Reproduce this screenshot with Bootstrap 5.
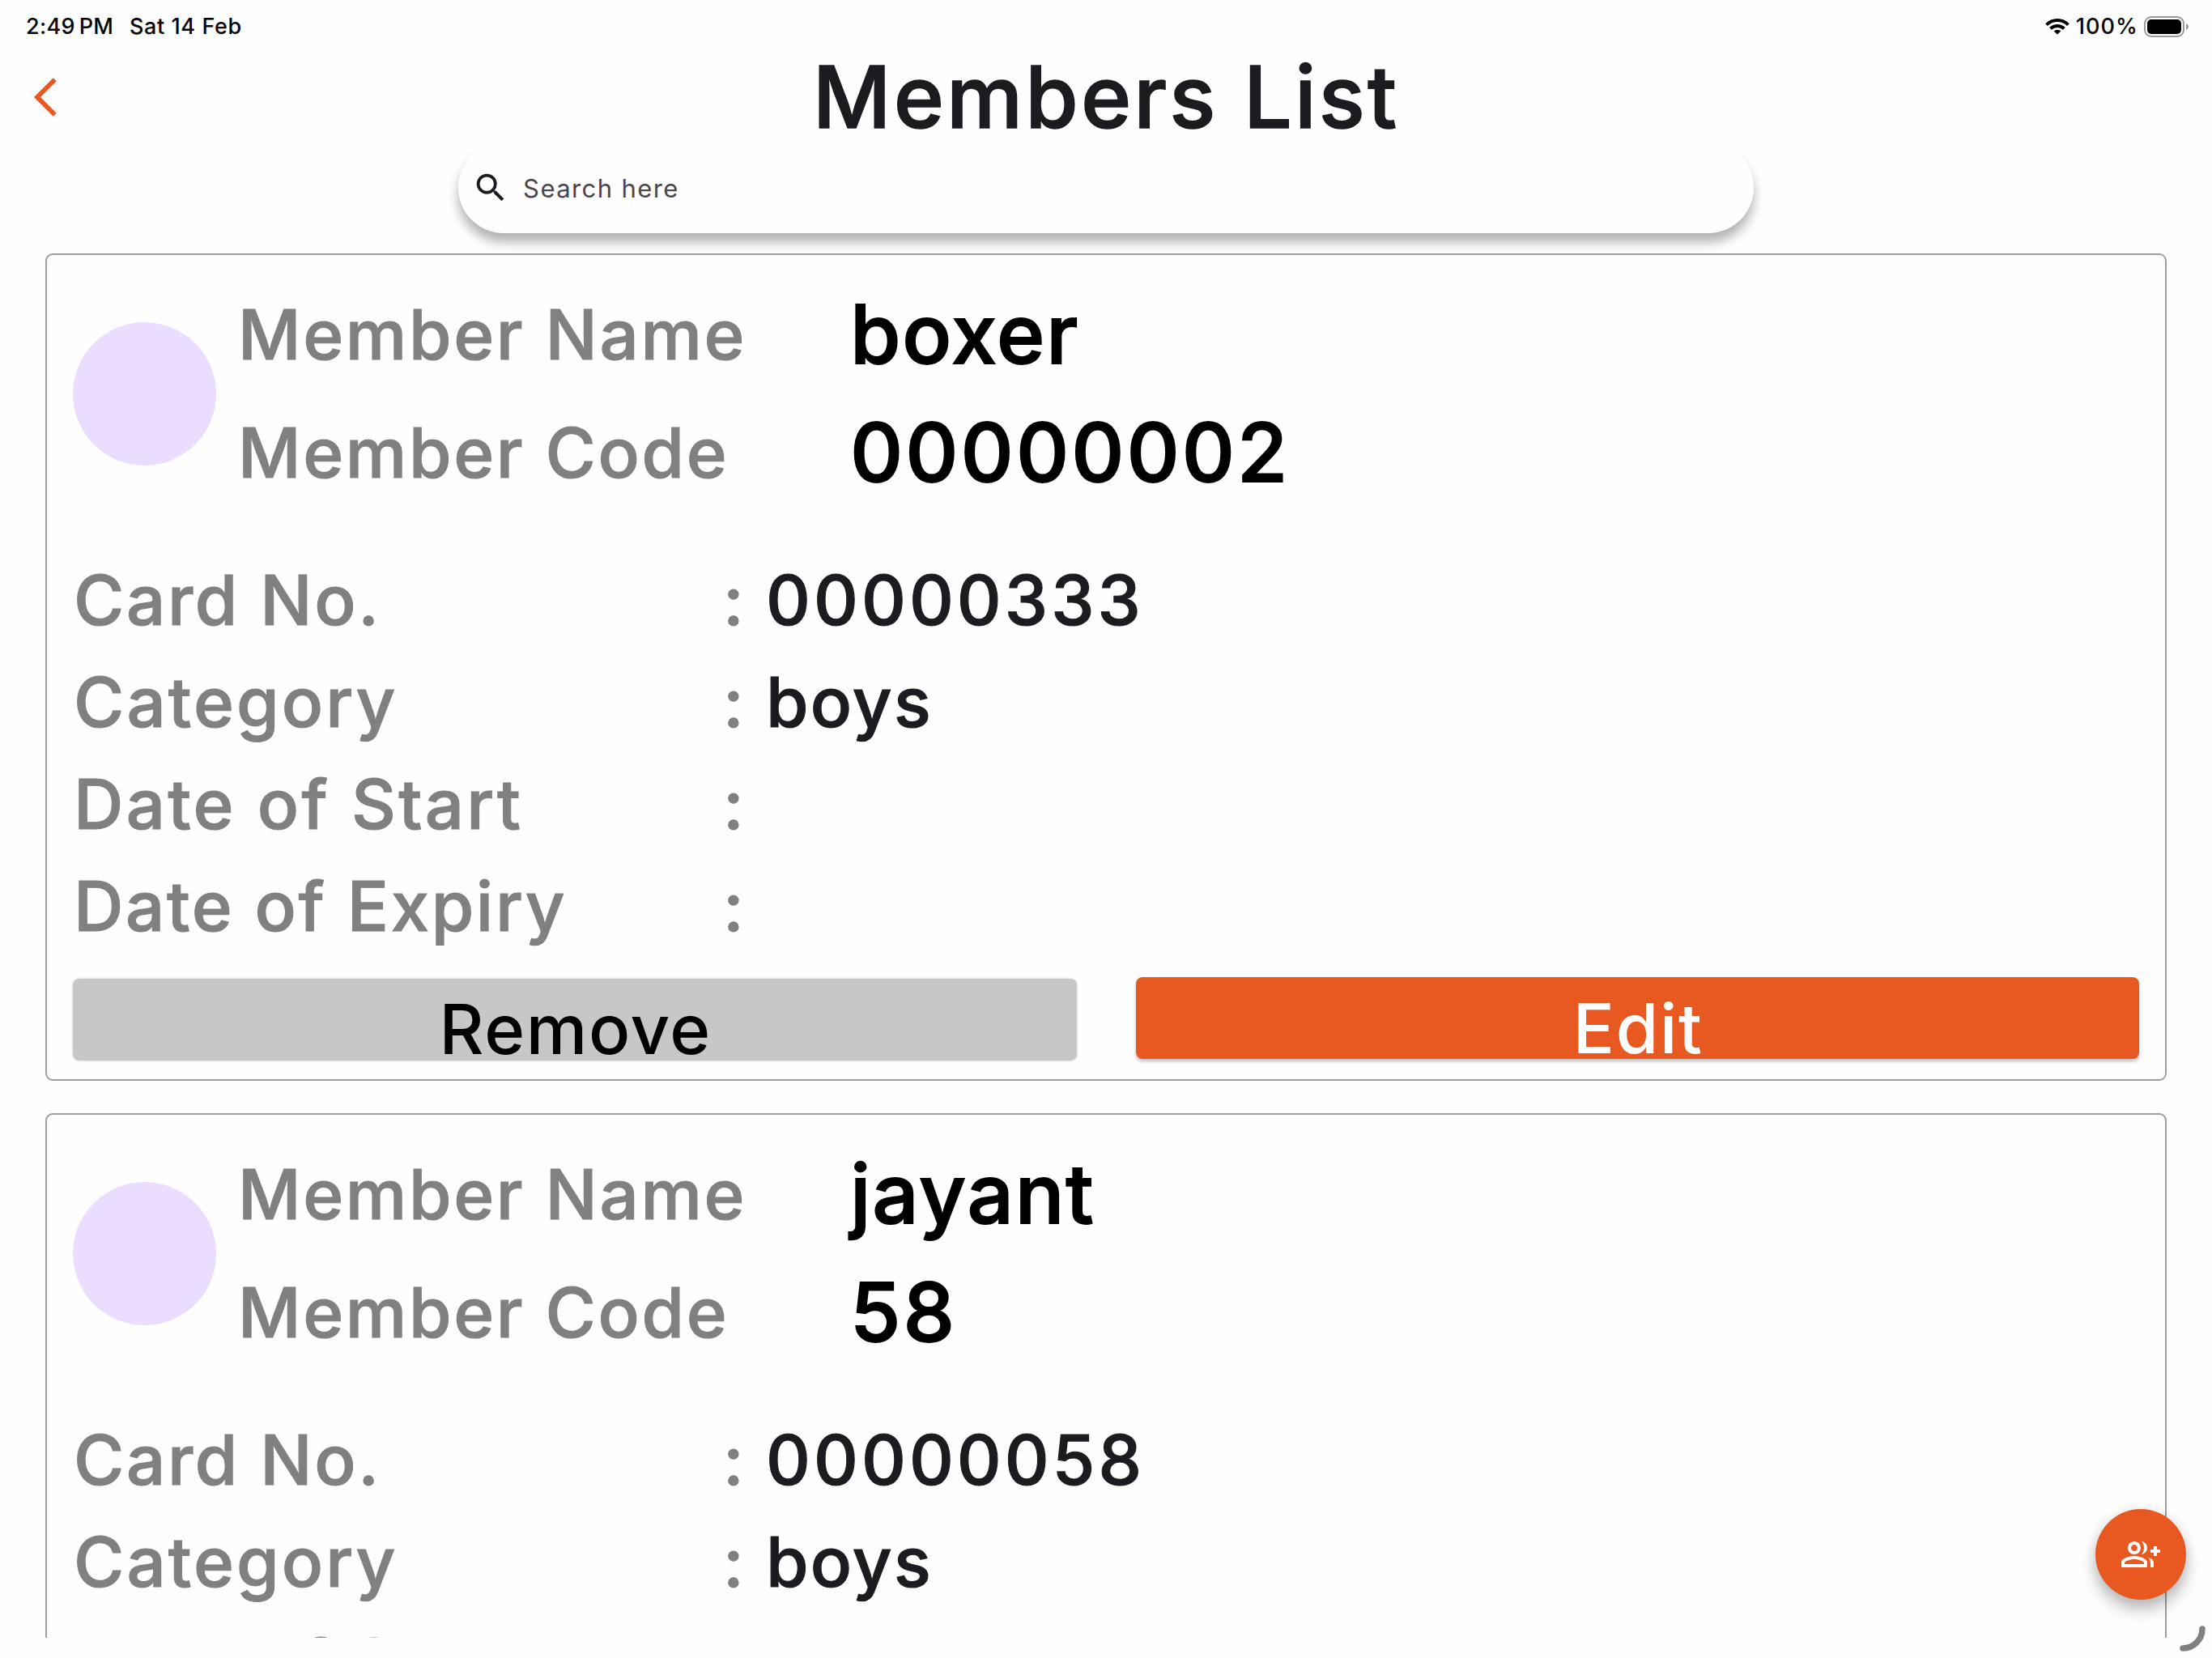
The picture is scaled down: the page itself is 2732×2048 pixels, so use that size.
<!DOCTYPE html>
<html lang="en">
<head>
  <meta charset="UTF-8">
  <meta name="viewport" content="width=device-width, initial-scale=1.0">
  <title>Members List</title>
  <!-- Bootstrap CSS -->
  <link href="https://cdn.jsdelivr.net/npm/bootstrap@5.3.0/dist/css/bootstrap.min.css" rel="stylesheet">
  <style>
    body {
      width: 2732px;
      height: 2048px;
      background: #fefefe;
      color: #1c1b20;
      font-family: Inter, "Liberation Sans", sans-serif;
      font-weight: 500;
    }
    .status-bar {
      height: 64px;
      padding: 2px 28px 0 32px;
      font-size: 27px;
      color: #000;
    }
    .status-bar svg { margin-bottom: 1px; }
    .status-time { width: 128px; letter-spacing: .3px; }
    .status-date { letter-spacing: .6px; }
    .status-battery { letter-spacing: 1.1px; margin: 0 7px 0 8px; }
    .page-head {
      height: 112px;
    }
    .page-head .back-link {
      left: 32px;
      line-height: 0;
    }
    .page-title {
      font-size: 106px;
      line-height: 112px;
      letter-spacing: 3.1px;
      -webkit-text-stroke: 1.5px currentColor;
    }
    .search-bar {
      width: 1600px;
      height: 112px;
      padding-left: 17px;
      gap: 17px;
      border-radius: 56px;
      background: #fefefe;
      box-shadow: 0 11px 14px rgba(0, 0, 0, .3);
    }
    .search-bar input {
      padding: 2px 0 0;
      font-size: 31px;
      font-weight: 400;
      letter-spacing: 1.4px;
    }
    .search-bar input::placeholder { color: #49454f; opacity: 1; }
    .member-list {
      height: 1710px;
      margin-top: 25px;
      padding: 0 56px;
    }
    .member-card {
      height: 1022px;
      margin-bottom: 40px;
      padding: 25px 32px;
      border: 2px solid #9e9e9e;
      border-radius: 9px;
      font-size: 85px;
      line-height: 127px;
      -webkit-text-stroke: 1.1px currentColor;
    }
    .avatar {
      width: 177px;
      height: 177px;
      margin-right: 27px;
      background: #eaddff;
    }
    .text-label { color: #808080; letter-spacing: 2.65px; }
    .head-row { height: 146px; line-height: 145px; }
    .head-row .text-label { width: 756px; line-height: 147px; }
    .head-value {
      font-size: 101px;
      color: #000;
      letter-spacing: 1.9px;
      -webkit-text-stroke: 1.8px currentColor;
    }
    .head-value.digits { letter-spacing: 3.1px; }
    .member-fields { margin-top: 46px; padding-left: 1px; }
    .field-row { height: 126px; }
    .field-row .field-name { width: 802px; }
    .field-row:nth-child(2) .field-name { letter-spacing: 3.1px; }
    .field-row:nth-child(3) .field-name { letter-spacing: 3.3px; }
    .field-row .field-colon { width: 53px; }
    .field-value { letter-spacing: 2.3px; }
    .field-value.digits { letter-spacing: 4.1px; }
    .member-actions { margin-top: 25px; gap: 73px; }
    .member-actions .btn {
      height: 101px;
      padding: 26px 0 0 2px;
      border: 0;
      border-radius: 8px;
      font-size: 85px;
      font-weight: 500;
      line-height: 75px;
      letter-spacing: 1.7px;
      -webkit-text-stroke: 0;
    }
    .member-actions .btn-remove { margin-top: 2px; padding-top: 24px; }
    .btn-remove, .btn-remove:hover { background: #c7c7c7; color: #000; box-shadow: 0 0 3px #c7c7c7; }
    .btn-edit, .btn-edit:hover { background: #e85921; color: #fff; box-shadow: 0 3px 4px rgba(0, 0, 0, .25); }
    .fab {
      right: 32px;
      bottom: 72px;
      width: 112px;
      height: 112px;
      background: #e85921;
      box-shadow: 0 12px 20px rgba(0, 0, 0, .26), 0 2px 16px rgba(0, 0, 0, .08);
    }
    .corner-mark { right: 8px; bottom: 8px; }
  </style>
</head>
<body class="position-relative overflow-hidden m-0">

  <div class="status-bar d-flex align-items-center">
    <span class="status-time">2:49&#8239;PM</span>
    <span class="status-date me-auto">Sat 14 Feb</span>
    <svg width="30" height="22" viewBox="0 0 30 22">
      <g fill="none" stroke="#000" stroke-width="4">
        <path d="M1.6 8.6a19 19 0 0 1 26.8 0"/>
        <path d="M6.6 13.4a12 12 0 0 1 16.8 0"/>
      </g>
      <path d="M15 20.6l-4.3-4.1a6.2 6.2 0 0 1 8.6 0z"/>
    </svg>
    <span class="status-battery">100%</span>
    <svg width="56" height="26" viewBox="0 0 56 26">
      <rect x="1" y="1" width="48" height="24" rx="8" fill="none" stroke="#999" stroke-width="2"/>
      <rect x="4" y="4" width="42" height="18" rx="5"/>
      <path d="M52 9c4 1.500 4 6.500 0 8z" fill="#999"/>
    </svg>
  </div>

  <div class="page-head position-relative d-flex align-items-center justify-content-center">
    <a href="#" class="back-link position-absolute">
      <svg width="48" height="48" viewBox="0 0 48 48" fill="none" stroke="#e85921" stroke-width="5.700"><path d="M35.700 2.300L14 24l21.700 21.700"/></svg>
    </a>
    <h1 class="page-title m-0">Members List</h1>
  </div>

  <div class="search-bar d-flex align-items-center mx-auto">
    <svg width="48" height="48" viewBox="0 0 24 24" fill="#1c1b20"><path d="M15.500 14h-.79l-.28-.27A6.470 6.470 0 0 0 16 9.500 6.500 6.500 0 1 0 9.500 16c1.610 0 3.090-.59 4.230-1.570l.27.28v.79l5 4.990L20.490 19l-4.990-5zm-6 0C7.010 14 5 11.990 5 9.500S7.010 5 9.500 5 14 7.010 14 9.500 11.990 14 9.500 14z"/></svg>
    <input type="text" class="form-control border-0 bg-transparent shadow-none" placeholder="Search here">
  </div>

  <div id="memberList" class="member-list overflow-hidden">
    <!-- cards are rendered by the script -->
  </div>

  <button type="button" class="fab btn rounded-circle border-0 p-0 position-absolute">
    <svg width="48" height="48" viewBox="0 0 24 24" fill="#fff"><path d="M22 9V7h-2v2h-2v2h2v2h2v-2h2V9zM8 12c2.210 0 4-1.790 4-4s-1.790-4-4-4-4 1.790-4 4 1.790 4 4 4zm0-6c1.100 0 2 .9 2 2s-.9 2-2 2-2-.9-2-2 .9-2 2-2zM8 13c-2.670 0-8 1.340-8 4v3h16v-3c0-2.660-5.330-4-8-4zm6 5H2v-.99C2.200 16.290 5.300 15 8 15s5.800 1.290 6 2v1zM12.510 4.050C13.430 5.110 14 6.490 14 8s-.57 2.890-1.490 3.950C14.470 11.700 16 10.040 16 8s-1.530-3.700-3.490-3.950zM16.530 13.830C17.420 14.660 18 15.700 18 17v3h2v-3c0-1.450-1.590-2.510-3.470-3.170z"/></svg>
  </button>

  <svg class="corner-mark position-absolute" width="32" height="32" viewBox="0 0 32 32" fill="none" stroke="#808080" stroke-width="7.500" stroke-linecap="round"><path d="M28 4A24 24 0 0 1 4 28"/></svg>

  <!-- Bootstrap JS Bundle with Popper -->
  <script src="https://cdn.jsdelivr.net/npm/bootstrap@5.3.0/dist/js/bootstrap.bundle.min.js"></script>

  <script>
    const members = [
      { name: 'boxer', code: '00000002', card: '00000333', category: 'boys', start: '', expiry: '' },
      { name: 'jayant', code: '58', card: '00000058', category: 'boys', start: '', expiry: '' }
    ];

    // numbers are tracked wider than words
    function valueClass(value) {
      return /^\d+$/.test(value) ? 'digits' : '';
    }

    function headRow(label, value) {
      return `<div class="head-row d-flex">
                <span class="text-label">${label}</span>
                <span class="head-value ${valueClass(value)}">${value}</span>
              </div>`;
    }

    function fieldRow(label, value) {
      return `<div class="field-row d-flex">
                <span class="text-label field-name">${label}</span>
                <span class="text-label field-colon">:</span>
                <span class="field-value ${valueClass(value)}">${value}</span>
              </div>`;
    }

    document.getElementById('memberList').innerHTML = members.map(m => `
      <div class="member-card">
        <div class="d-flex align-items-center">
          <div class="avatar rounded-circle"></div>
          <div>
            ${headRow('Member Name', m.name)}
            ${headRow('Member Code', m.code)}
          </div>
        </div>
        <div class="member-fields">
          ${fieldRow('Card No.', m.card)}
          ${fieldRow('Category', m.category)}
          ${fieldRow('Date of Start', m.start)}
          ${fieldRow('Date of Expiry', m.expiry)}
        </div>
        <div class="member-actions d-flex">
          <button type="button" class="btn btn-remove flex-fill w-50">Remove</button>
          <button type="button" class="btn btn-edit flex-fill w-50">Edit</button>
        </div>
      </div>`).join('');
  </script>
</body>
</html>
